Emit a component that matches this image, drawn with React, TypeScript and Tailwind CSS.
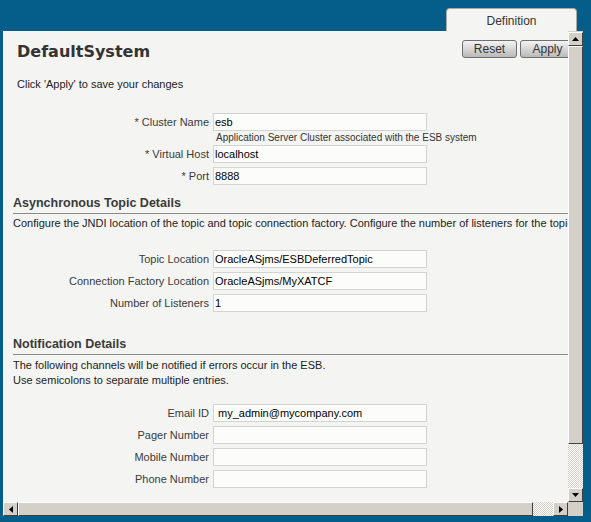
import React from "react";

const body = "font-['Liberation_Sans',Arial,sans-serif]";

function Field({ label, value, wide }: { label: string; value?: string; wide?: boolean }) {
  return (
    <div className="flex items-center h-[18px]">
      <div className="w-[210px] text-right text-[11px] text-[#3a3a3a] pr-[4px] leading-none">{label}</div>
      <div
        className={`w-[214px] h-[18px] border border-[#d3d4d2] bg-[#fcfdfb] flex items-center text-[11px] text-black leading-none ${
          wide ? "pl-[4px]" : "pl-[1px]"
        }`}
      >
        {value}
      </div>
    </div>
  );
}

function Section({ title }: { title: string }) {
  return (
    <div className="ml-[10px] border-b border-[#8a8a8a] h-[29px] flex items-end pb-[4px]">
      <span className="font-bold text-[12.5px] text-[#3a3a3a] leading-none">{title}</span>
    </div>
  );
}

function Btn({ label, w }: { label: string; w: string }) {
  return (
    <div
      className={`${w} h-[18px] rounded-[3px] border border-[#6f6f6f] bg-gradient-to-b from-[#f4f4f4] to-[#b9b9b9] flex items-center justify-center text-[12px] text-[#333] leading-none`}
    >
      {label}
    </div>
  );
}

const bevel = "bg-[#d4d0c8] border border-t-white border-l-white border-r-[#404040] border-b-[#404040]";
const checker = "bg-[repeating-conic-gradient(#d4d0c8_0_25%,#ffffff_0_50%)] bg-[length:2px_2px]";

export default function App() {
  return (
    <div className={`w-[591px] h-[522px] bg-[#055e8a] overflow-hidden ${body}`}>
      <div className="h-[31px] flex items-end justify-end pr-[14px]">
        <div className="w-[131px] h-[23px] rounded-t-[4px] border border-b-0 border-[#a9aaa8] bg-[#f4f5f3] flex items-center justify-center text-[12px] text-[#333] pt-[1px]">
          Definition
        </div>
      </div>
      <div className="ml-[3px] grid grid-cols-[565px_15px] grid-rows-[471px_14px]">
        <div className="bg-[#f4f5f3] overflow-hidden">
          <div className="w-[600px]">
            <div className="flex items-start pt-[9px] pl-[14px]">
              <div className="font-['DejaVu_Sans',sans-serif] font-bold text-[16px] text-[#333] leading-none mt-[4px] w-[445px]">
                DefaultSystem
              </div>
              <div className="flex gap-[3px]">
                <Btn label="Reset" w="w-[55px]" />
                <Btn label="Apply" w="w-[55px]" />
              </div>
            </div>
            <div className="pl-[14px] mt-[19px] text-[11px] text-[#222] leading-none">
              Click 'Apply' to save your changes
            </div>
          </div>

          <div className="mt-[23px]">
            <Field label="* Cluster Name" value="esb" />
            <div className="pl-[213px] h-[14px] flex items-center text-[10px] text-[#333] leading-none">
              Application Server Cluster associated with the ESB system
            </div>
            <div className="flex flex-col gap-[4px]">
              <Field label="* Virtual Host" value="localhost" />
              <Field label="* Port" value="8888" />
            </div>
          </div>

          <Section title="Asynchronous Topic Details" />
          <div className="ml-[10px] mt-[4px] text-[11px] text-[#222] leading-none whitespace-nowrap">
            Configure the JNDI location of the topic and topic connection factory. Configure the number of listeners for the topic.
          </div>

          <div className="mt-[21px] flex flex-col gap-[4px]">
            <Field label="Topic Location" value="OracleASjms/ESBDeferredTopic" />
            <Field label="Connection Factory Location" value="OracleASjms/MyXATCF" />
            <Field label="Number of Listeners" value="1" />
          </div>

          <div className="mt-[14px]">
            <Section title="Notification Details" />
          </div>
          <div className="ml-[10px] mt-[3px] text-[11px] text-[#222] leading-[15px]">
            <div>The following channels will be notified if errors occur in the ESB.</div>
            <div>Use semicolons to separate multiple entries.</div>
          </div>

          <div className="mt-[16px] flex flex-col gap-[4px]">
            <Field label="Email ID" value="my_admin@mycompany.com" wide />
            <Field label="Pager Number" />
            <Field label="Mobile Number" />
            <Field label="Phone Number" />
          </div>
        </div>

        <div className="flex flex-col bg-[#d4d0c8] pt-[1px]">
          <div className={`h-[14px] ${bevel} flex items-center justify-center`}>
            <svg width="7" height="4" viewBox="0 0 7 4"><path d="M3.5 0L7 4H0z" fill="#000" /></svg>
          </div>
          <div className={`h-[398px] ${bevel}`} />
          <div className={`flex-1 ${checker}`} />
          <div className={`h-[14px] ${bevel} flex items-center justify-center`}>
            <svg width="7" height="4" viewBox="0 0 7 4"><path d="M0 0H7L3.5 4z" fill="#000" /></svg>
          </div>
        </div>

        <div className="flex bg-[#d4d0c8]">
          <div className={`w-[15px] ${bevel} flex items-center justify-center`}>
            <svg width="4" height="7" viewBox="0 0 4 7"><path d="M0 3.5L4 0V7z" fill="#000" /></svg>
          </div>
          <div className={`w-[515px] ${bevel}`} />
          <div className={`flex-1 ${checker}`} />
          <div className={`w-[15px] ${bevel} flex items-center justify-center`}>
            <svg width="4" height="7" viewBox="0 0 4 7"><path d="M4 3.5L0 0V7z" fill="#000" /></svg>
          </div>
        </div>
        <div className="bg-[#d4d0c8]" />
      </div>
    </div>
  );
}
